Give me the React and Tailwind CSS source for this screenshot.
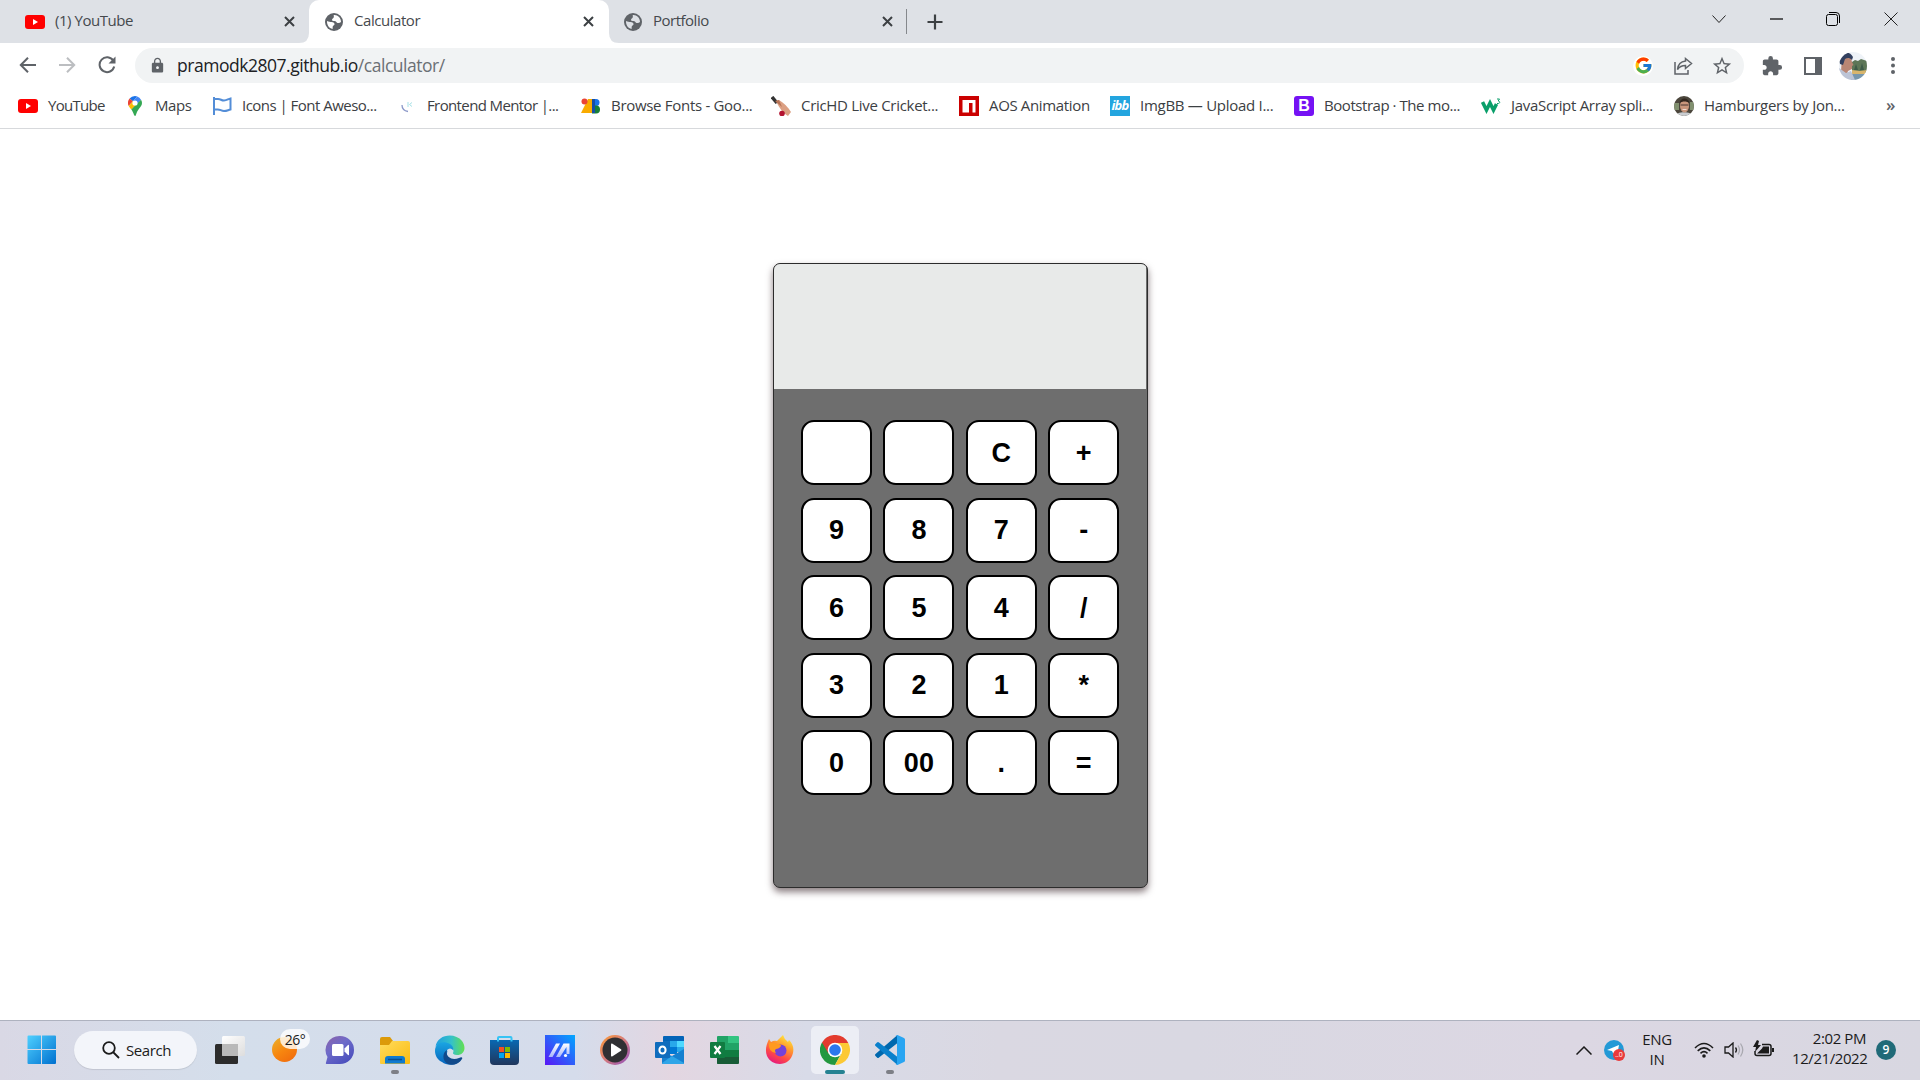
import React from "react";
import { FcGoogle } from "react-icons/fc";
import { MdLock, MdStarBorder, MdExtension } from "react-icons/md";

const YT = () => (
  <svg width="20" height="14" viewBox="0 0 20 14"><rect width="20" height="14" rx="3" fill="#f00" /><path d="M8 4l5 3-5 3z" fill="#fff" /></svg>
);
const CloseX = () => (
  <svg width="11" height="11" viewBox="0 0 11 11"><path d="M1 1l9 9M10 1l-9 9" stroke="#3c4043" strokeWidth="2" /></svg>
);
const Globe = ({ bg }) => (
  <svg width="18" height="18" viewBox="0 0 18 18">
    <circle cx="9" cy="9" r="9" fill="#5f6368" />
    <path d="M9.500 2C13 2 16 5 16 9c-1.500 1.500-3.500 1.300-4.500.2C10.800 8 10 8 8.500 8 7 8 6.500 6.500 7.500 5.700 9 5 9 4 8.700 2z" fill={bg} />
    <path d="M2 8c2 1 3 .8 4.500 1 2 .3 3.300 1 3 2.500-.2 1-1.700 1-1.800 2.300L7.600 16C4 15.200 1.800 12 2 8z" fill={bg} />
  </svg>
);

const Tab = ({ icon, title, active, cls, tcls }) => (
  <div className={`relative flex h-[43px] shrink-0 items-center ${cls} ${active ? "rounded-t-[10px] bg-white" : ""}`}>
    <span className="flex w-5 shrink-0 justify-center">{icon}</span>
    <span className={`mb-[3px] ml-[10px] flex-1 text-[15px] leading-5 whitespace-nowrap text-[#45494d] ${tcls}`}>{title}</span>
    <CloseX />
    {active && (
      <>
        <svg className="absolute bottom-0 -left-[10px]" width="10" height="10"><path d="M10 0v10H0Q10 10 10 0z" fill="#fff" /></svg>
        <svg className="absolute -right-[10px] bottom-0" width="10" height="10"><path d="M0 0v10h10Q0 10 0 0z" fill="#fff" /></svg>
      </>
    )}
  </div>
);

const MapsIcon = () => (
  <svg width="14" height="20" viewBox="0 0 14 20">
    <path d="M7 0a7 7 0 0 0-5.4 2.5L4.9 5.3 9.2.4A7 7 0 0 0 7 0z" fill="#1a73e8" />
    <path d="M1.6 2.5A7 7 0 0 0 .7 10L4.9 5.3z" fill="#ea4335" />
    <path d="M9.2.4L4.9 5.3 9 8.7l4-5A7 7 0 0 0 9.2.4z" fill="#4285f4" />
    <path d="M.7 10c.6 1.2 1.6 2.3 2.6 3.6L9 8.7 4.9 5.3z" fill="#fbbc04" />
    <path d="M13 3.700l-9.700 9.900C5.500 16.500 6 20 7 20c1.200 0 1.100-3.500 3.500-6.600C12.300 11 14 9.500 14 7c0-1.300-.4-2.300-1-3.300z" fill="#34a853" />
    <circle cx="7" cy="7" r="2.600" fill="#fff" />
  </svg>
);
const FlagIcon = () => (
  <svg width="19" height="18" viewBox="0 0 19 18" fill="none" stroke="#538dd7" strokeWidth="2"><path d="M1 0v18" /><path d="M1 2h4c3 0 3 1.500 6 1.500S15 2 17.500 1.500v11c-2.500.5-3.500 1.500-6.500 1.500s-4-2-7-1.500H1" /></svg>
);
const MentorIcon = () => (
  <svg width="14" height="14" viewBox="0 0 14 14" fill="none" strokeWidth="1.300"><path d="M2 6c0 4 3 6 6 6.500" stroke="#8a97c8" /><path d="M8 3v5M12 3.500L9.500 5.500l2.500 2" stroke="#a6e1e6" strokeWidth="1" /></svg>
);
const FontsIcon = () => (
  <svg width="20" height="16" viewBox="0 0 20 16"><path d="M7 1h5v14H0z" fill="#f9ab00" /><circle cx="3.500" cy="3.500" r="3" fill="#ea4335" /><path d="M11 1h4a3.500 3.500 0 0 1 0 7h-4z" fill="#1a73e8" /><path d="M11 7.500h4a4 4 0 0 1 0 8h-4z" fill="#188038" /><path d="M11 1h3v14h-3z" fill="#174ea6" /></svg>
);
const BatIcon = () => (
  <svg width="20" height="20" viewBox="0 0 20 20"><path d="M1 1l5 6" stroke="#333" strokeWidth="3.500" /><path d="M5 5l3-1c5 3 9 7 12 12l-3 4c-4-2-9-8-12-15z" fill="#dca083" /><path d="M4 5l4-1 3 7z" fill="#b77356" /><circle cx="11" cy="17.500" r="2.800" fill="#b31230" /></svg>
);
const AosIcon = () => (
  <svg width="20" height="20" viewBox="0 0 20 20"><path d="M0 0h20v20H0z" fill="#cb0000" /><path d="M3.500 4h13v12.500h-3V7h-3.500v9.500H3.500z" fill="#fff" /></svg>
);
const ImgbbIcon = () => (
  <span className="flex h-5 w-5 items-center justify-center bg-[#23a5df] font-['Open_Sans',sans-serif] text-[13px] font-bold tracking-[-0.8px] text-white italic">ibb</span>
);
const BootIcon = () => (
  <span className="flex h-5 w-5 items-center justify-center rounded-[3px] bg-[#7512f4] font-['Liberation_Sans',sans-serif] text-[16px] font-bold text-white">B</span>
);
const W3Icon = () => (
  <svg width="20" height="16" viewBox="0 0 20 16" fill="none" stroke="#0a9f6a"><path d="M1.500 4l4 8 3.500-7 3.500 7L15.500 6" strokeWidth="3.600" /><path d="M16 1h2.500L17.200 3c2 0 2 2.500 0 2.500H16" strokeWidth="1" /></svg>
);
const FaceIcon = () => (
  <svg width="20" height="20" viewBox="0 0 20 20"><defs><clipPath id="fc"><circle cx="10" cy="10" r="10" /></clipPath></defs><g clipPath="url(#fc)"><path d="M0 0h20v20H0z" fill="#4b463c" /><path d="M0 7h5v7H0zM16 6h4v8h-4z" fill="#81906f" /><path d="M1 20c1-5 17-5 18 0z" fill="#c9ccd0" /><ellipse cx="10.500" cy="10" rx="4.500" ry="6.500" fill="#c9967c" /><path d="M5.500 7c1-6 9-6 10 0-3-2-7-2-10 0z" fill="#32271f" /><path d="M6.500 9h8" stroke="#453530" /><path d="M8.500 13.500h4" stroke="#f1dcd2" /></g></svg>
);

const bookmarks = [
  [<YT />, "YouTube", "w-[107px]", "tracking-[-0.7px]"],
  [<MapsIcon />, "Maps", "w-[87px]", "tracking-[-0.4px]"],
  [<FlagIcon />, "Icons | Font Aweso...", "w-[185px]", "tracking-[-0.52px]"],
  [<MentorIcon />, "Frontend Mentor |...", "w-[184px]", "tracking-[-0.62px]"],
  [<FontsIcon />, "Browse Fonts - Goo...", "w-[190px]", "tracking-[-0.3px]"],
  [<BatIcon />, "CricHD Live Cricket...", "w-[188px]", "tracking-[-0.3px]"],
  [<AosIcon />, "AOS Animation", "w-[151px]", "tracking-[-0.35px]"],
  [<ImgbbIcon />, "ImgBB — Upload I...", "w-[184px]", "tracking-[-0.28px]"],
  [<BootIcon />, "Bootstrap · The mo...", "w-[187px]", "tracking-[-0.45px]"],
  [<W3Icon />, "JavaScript Array spli...", "w-[193px]", "tracking-[-0.3px]"],
  [<FaceIcon />, "Hamburgers by Jon...", "w-[200px]", "tracking-[-0.28px]"],
];

const Avatar = () => (
  <svg width="28" height="28" viewBox="0 0 28 28"><defs><clipPath id="av"><circle cx="14" cy="14" r="14" /></clipPath></defs><g clipPath="url(#av)"><path d="M0 0h28v28H0z" fill="#eff3f8" /><path d="M13 10l3-2 3 1 3-2 6 2v12H13z" fill="#5d7657" /><path d="M17 12l2 6h-4zM23 11l2 7h-4z" fill="#3e5b48" /><path d="M13 18l8 1 7-1v4H13z" fill="#d8b56c" /><path d="M12 22h16v6H12z" fill="#7797ad" /><path d="M3 6h9l1 4 1.500 3-1.500 1v3l-4 2-1 3-6-3z" fill="#b98674" /><path d="M0 8C3-1 11-1 14 5l-1 3C10 5 8 6 6 7L4 13 1 12z" fill="#33405f" /><path d="M0 16l7 5 5-2 4 9H0z" fill="#bcc4d6" /></g></svg>
);

const keys = ["", "", "C", "+", "9", "8", "7", "-", "6", "5", "4", "/", "3", "2", "1", "*", "0", "00", ".", "="];

const Calculator = () => (
  <div className="h-[625px] w-[375px] overflow-hidden rounded-[7px] border border-[#2c2c2c] bg-[#6e6e6e] shadow-[0_4px_7px_rgba(60,40,45,0.6)]">
    <div className="mr-px h-[125px] bg-[#e8eae9]" />
    <div className="mt-[31px] ml-[27px] grid grid-cols-[71px_71px_71px_71px] gap-x-[11.4px] gap-y-[12.5px]">
      {keys.map((k, i) => (
        <button key={i} className="h-[65px] rounded-[13px] border-2 border-black bg-white font-['Liberation_Sans',Arial,sans-serif] text-[27px] leading-[30px] font-bold text-black">{k}</button>
      ))}
    </div>
  </div>
);

const WinLogo = () => (
  <svg width="30" height="30" viewBox="0 0 30 30"><defs><linearGradient id="wl" x1="0" y1="0" x2="1" y2="1"><stop offset="0" stopColor="#4fd0ff" /><stop offset="1" stopColor="#0070cf" /></linearGradient></defs><path d="M1.500 .5H14V14H.5V1.500Q.5.5 1.500 .5zM15 .5H28q1 0 1 1v12.500h-14zM.5 15H14v14H1.500Q.5 29 .5 28zM15 15h14V28q0 1-1 1H15z" fill="url(#wl)" /></svg>
);
const TaskView = () => (
  <svg width="30" height="30" viewBox="0 0 30 30"><defs><linearGradient id="tv" x1="0" y1="0" x2="1" y2="1"><stop offset="0" stopColor="#fff" /><stop offset="1" stopColor="#ddd" /></linearGradient></defs><rect y="9" width="23" height="20" rx="1.500" fill="#2c2c2c" /><rect x="7" y="1" width="23" height="20" rx="1.500" fill="url(#tv)" /><path d="M7 9h16v12H8.500Q7 21 7 19.500z" fill="#b9b9b9" /></svg>
);
const Chat = () => (
  <svg width="30" height="30" viewBox="0 0 30 30"><defs><linearGradient id="ch" x1="0" y1="0" x2="0.7" y2="1"><stop offset="0" stopColor="#8c62a8" /><stop offset=".45" stopColor="#6e6bc9" /><stop offset="1" stopColor="#4a4fbd" /></linearGradient></defs><path d="M15 1a14 14 0 1 1 0 28H1.500Q.5 29 1 27.500L2.500 22A14 14 0 0 1 15 1z" fill="url(#ch)" /><rect x="7" y="9" width="11.500" height="12" rx="1.500" fill="#fff" /><path d="M19.500 13.500L23 10q1-.5 1 .5v9q0 1-1 .5l-3.500-3.500z" fill="#fff" /></svg>
);
const Explorer = () => (
  <svg width="30" height="30" viewBox="0 0 30 30"><defs><linearGradient id="ex" x1="0" y1="0" x2="1" y2="1"><stop offset="0" stopColor="#ffdc5e" /><stop offset="1" stopColor="#fbbb10" /></linearGradient></defs><path d="M0 4q0-2 2-2h8l3 4v5H0z" fill="#dc9a09" /><path d="M0 10h9l3-4h16q2 0 2 2v20q0 1-1 1H1q-1 0-1-1z" fill="url(#ex)" /><path d="M5 28.500V24q0-3 3-3h14q3 0 3 3v4.500z" fill="#0f7bd0" /><path d="M8 24.500h14" stroke="#084f91" strokeWidth="1.500" /></svg>
);
const Edge = () => (
  <svg width="30" height="30" viewBox="0 0 30 30"><defs><linearGradient id="e1"><stop offset="0" stopColor="#1f9ee0" /><stop offset=".55" stopColor="#35c1c9" /><stop offset="1" stopColor="#63e04f" /></linearGradient><linearGradient id="e2" x1="0" y1="0" x2="0" y2="1"><stop offset="0" stopColor="#1ba5e2" /><stop offset="1" stopColor="#0664bd" /></linearGradient></defs><path d="M.5 12C2-1 20-3 27 6c5 7 2 14-5 14-4 0-6-2-4-4 1-1 0-4-3-5C9 7 3 8 .5 12z" fill="url(#e1)" /><path d="M0 16C0 8 8 5 15 9c3 2 4 5 3 7-2-3-7 0-6 4 1 6 8 7 14 5-5 6-14 6-19 2-4-2-7-6-7-11z" fill="url(#e2)" /><path d="M12 15c-2 7 5 11 12 8 2-1 4-1 3 1-3 5-9 7-14 5-6-3-6-11-1-14z" fill="#114a8b" /><path d="M12 15q3-3 6 0 1 1 0 3 0 2 4 3-7 1-9-3-.5-1-1-3z" fill="#d6dfea" /></svg>
);
const Store = () => (
  <svg width="30" height="30" viewBox="0 0 30 30"><defs><linearGradient id="st" x1="0" y1="0" x2="0" y2="1"><stop offset="0" stopColor="#0968b2" /><stop offset="1" stopColor="#20365c" /></linearGradient></defs><path d="M0 5h29v21q0 4-4 4H4q-4 0-4-4z" fill="url(#st)" /><path d="M8 6.500V3q0-1 1-1h11.500q1 0 1 1v3.500" fill="none" stroke="#36c3f4" strokeWidth="2" /><path d="M9 12h5v5H9z" fill="#f25022" /><path d="M15 12h5v5h-5z" fill="#7fba00" /><path d="M9 18h5v5H9z" fill="#00a4ef" /><path d="M15 18h5v5h-5z" fill="#ffb900" /></svg>
);
const MyAsus = () => (
  <svg width="30" height="30" viewBox="0 0 30 30"><defs><linearGradient id="ma" x1="0" y1="1" x2="1" y2="0"><stop offset="0" stopColor="#5a16f5" /><stop offset="1" stopColor="#00a8ff" /></linearGradient><linearGradient id="ml" x1="0" y1="1" x2="0" y2="0"><stop offset="0" stopColor="#a9b6fb" /><stop offset="1" stopColor="#fff" /></linearGradient></defs><path d="M0 0h30v30H0z" fill="url(#ma)" /><path d="M3.500 22L11 8.500h4L7.500 22zM11 22l7.500-13.500h6V19h-3v-7L15 22z" fill="url(#ml)" /><circle cx="20.500" cy="20.500" r="1.600" fill="#fff" /></svg>
);
const Media = () => (
  <svg width="30" height="30" viewBox="0 0 30 30"><defs><linearGradient id="md" x1="0" y1="0" x2="1" y2="1"><stop offset="0" stopColor="#ff9c33" /><stop offset=".5" stopColor="#d47a7d" /><stop offset="1" stopColor="#8e4fc0" /></linearGradient></defs><circle cx="15" cy="15" r="15" fill="url(#md)" /><circle cx="15" cy="15" r="12.500" fill="#303033" /><path d="M11 9.500q0-1.500 1.500-.7l8.500 5.500q1 .7 0 1.400l-8.500 5.500q-1.500.8-1.500-.7z" fill="#fff" /></svg>
);
const Outlook = () => (
  <svg width="30" height="30" viewBox="0 0 30 30"><path d="M8 2q0-1 1-1h19q1 0 1 1v14H8z" fill="#0364b8" /><path d="M8 6h7v7H8z" fill="#0f6cbd" /><path d="M15 6h7v7h-7z" fill="#28a8ea" /><path d="M22 6h7v7h-7z" fill="#50d9ff" /><path d="M15 12h7v7h-7z" fill="#0078d4" /><path d="M22 12h7v5h-7z" fill="#28a8ea" /><path d="M7 17l10 4 12-7v14q0 1-1 1H8q-1 0-1-1z" fill="#1580d0" /><path d="M7 28l10-7 12 7q0 1-1 1H8z" fill="#2fa5e8" /><rect y="7" width="15" height="16" rx="1" fill="#0f6cbd" /><ellipse cx="7.500" cy="15" rx="3.100" ry="3.600" fill="none" stroke="#fff" strokeWidth="2" /></svg>
);
const Excel = () => (
  <svg width="30" height="30" viewBox="0 0 30 30"><path d="M7 2q0-1 1-1h10v28H8q-1 0-1-1z" fill="#21a366" /><path d="M18 1h10q1 0 1 1v6H18z" fill="#33c481" /><path d="M18 8h11v7H18z" fill="#21a366" /><path d="M7 15h11v7H7zM18 15h11v7H18z" fill="#107c41" /><path d="M7 22h22v6q0 1-1 1H8q-1 0-1-1z" fill="#185c37" /><rect y="7" width="15" height="16" rx="1" fill="#107c41" /><path d="M4.500 11l6 8M10.500 11l-6 8" stroke="#fff" strokeWidth="2.200" /></svg>
);
const Firefox = () => (
  <svg width="30" height="30" viewBox="0 0 30 30"><defs><linearGradient id="ff" x1=".8" y1="0" x2=".3" y2="1"><stop offset="0" stopColor="#fff13f" /><stop offset=".35" stopColor="#ffa22e" /><stop offset=".7" stopColor="#ff4a45" /><stop offset="1" stopColor="#e51880" /></linearGradient></defs><path d="M4 4l2 3q3-2 6-1 3-3 6-6 1 4 5 7l1-2c4 4 5 8 4 13-3 14-21 14-26 3C0 16 1 10 4 4z" fill="url(#ff)" /><circle cx="15.500" cy="15.500" r="6" fill="#7542d8" /><path d="M4 8q6-1 8 1l4 1q0 3-5 4-2 1 0 4-8-1-7-10z" fill="#ff9a20" /></svg>
);
const Chrome = () => (
  <svg width="30" height="30" viewBox="0 0 30 30"><path d="M15 15L2 7.500A15 15 0 0 0 15 30l6-11z" fill="#24983f" /><path d="M15 8h13.300A15 15 0 0 1 15 30l6.500-11.500z" fill="#fcc934" /><path d="M2 7.500a15 15 0 0 1 26.300.5H15L8.500 18.500z" fill="#e33b2e" /><circle cx="15" cy="15" r="7.300" fill="#fff" /><circle cx="15" cy="15" r="5.800" fill="#2a78ed" /></svg>
);
const VSCode = () => (
  <svg width="30" height="30" viewBox="0 0 30 30"><path d="M22.500 0v8L4 22.500q-1 1-2 0L.5 21q-1-1 0-2z" fill="#0068ae" /><path d="M22.500 30v-8L4 7.500q-1-1-2 0L.5 9q-1 1 0 2z" fill="#0a80cc" /><path d="M22.500 0L29 3q1 .5 1 1.500v21q0 1-1 1.500l-6.500 3q-1 0-2-1 1.500.5 1.500-1V2q0-1.500-1.500-1z" fill="#29a5f2" /></svg>
);

const Pinned = ({ children, run }) => (
  <span className="relative flex h-12 w-[55px] shrink-0 items-center justify-center">
    {children}
    {run && <span className="absolute bottom-0 h-1 w-2 rounded-full bg-[#7d7f86]" />}
  </span>
);

export default function App() {
  return (
    <div className="flex h-[1080px] w-[1920px] flex-col overflow-hidden bg-white font-['Open_Sans','Noto_Sans',sans-serif] text-[#3c4043]">
      <header className="shrink-0">
        <div className="flex h-[43px] items-center bg-[#dee1e6]">
          <Tab icon={<YT />} title="(1) YouTube" cls="w-[309px] pl-[25px] pr-[14px]" tcls="tracking-[-0.45px]" />
          <Tab icon={<Globe bg="#fff" />} title="Calculator" active cls="w-[300px] pl-[15px] pr-[15px]" tcls="tracking-[-0.45px]" />
          <Tab icon={<Globe bg="#dee1e6" />} title="Portfolio" cls="w-[297px] pl-[14px] pr-[13px]" tcls="tracking-[-0.5px]" />
          <span className="h-[25px] w-px bg-[#85888c]" />
          <svg className="ml-[20px]" width="16" height="16"><path d="M8 .5v15M.5 8h15" stroke="#3c4043" strokeWidth="2.200" /></svg>
          <div className="mb-[6px] ml-auto flex w-[230px] items-center justify-around text-black">
            <svg width="14" height="8" fill="none" stroke="#222"><path d="M.5.5L7 7.500 13.500.5" /></svg>
            <svg width="13" height="2"><path d="M0 1h13" stroke="#000" strokeWidth="1.200" /></svg>
            <svg width="14" height="14" fill="none" stroke="#000"><rect x=".5" y="2.500" width="11" height="11" rx="2" /><path d="M3 .5h7q3.500 0 3.500 3.500v7" /></svg>
            <svg width="14" height="14" fill="none" stroke="#222"><path d="M.5.5l13 13M13.500.5l-13 13" /></svg>
          </div>
        </div>
        <div className="flex h-[45px] items-center">
          <svg className="mb-px ml-[19px]" width="17" height="16" fill="none" stroke="#5f6368" strokeWidth="2"><path d="M17 8H2M9 .8L1.800 8 9 15.200" /></svg>
          <svg className="mb-px ml-[23px]" width="17" height="16" fill="none" stroke="#bcbec1" strokeWidth="2"><path d="M0 8h15M8 .8L15.200 8 8 15.200" /></svg>
          <svg className="mb-[2px] ml-[22px]" width="18" height="18" viewBox="0 0 18 18" fill="none" stroke="#5f6368" strokeWidth="2"><path d="M15.300 4.800A7.400 7.400 0 1 0 16.200 10.500" /><path d="M17.500.5v7h-7z" fill="#5f6368" stroke="none" /></svg>
          <div className="ml-[19px] flex h-[35px] w-[1609px] items-center rounded-full bg-[#f1f3f4] pl-[14px]">
            <MdLock size={17} color="#5f6368" />
            <span className="mb-px ml-[11px] flex-1 text-[17.500px] leading-6 tracking-[-0.47px] text-[#202124]">pramodk2807.github.io<span className="text-[#6b7075]">/calculator/</span></span>
            <span className="mr-[20px] flex h-5 w-5 items-center justify-center rounded-full bg-white"><FcGoogle size={19} /></span>
            <svg className="mr-[18px]" width="20" height="18" viewBox="0 0 20 18" fill="none" stroke="#5f6368" strokeWidth="1.500"><path d="M2 5v12h13v-4" /><path d="M12.500 1.500l6 5-6 5V8.500c-4 0-6 1-8 4 .5-5 3.500-8 8-8.500z" /></svg>
            <MdStarBorder className="mr-[11px]" size={22} color="#5f6368" />
          </div>
          <MdExtension className="ml-[17px]" size={22} color="#5f6368" />
          <svg className="ml-[21px]" width="18" height="18"><path d="M1 1h16v16H1z" fill="none" stroke="#5f6368" strokeWidth="2" /><path d="M11 1h6v16h-6z" fill="#5f6368" /></svg>
          <span className="ml-[17px]"><Avatar /></span>
          <svg className="mb-px ml-[24px]" width="4" height="17"><g fill="#5f6368"><circle cx="2" cy="2" r="2" /><circle cx="2" cy="8.500" r="2" /><circle cx="2" cy="15" r="2" /></g></svg>
        </div>
        <div className="flex h-[41px] items-center border-b border-[#d7d9dc] pb-[4px] pl-[18px]">
          {bookmarks.map(([icon, t, w, tr]) => (
            <div key={t} className={`flex shrink-0 items-center ${w}`}>
              <span className="flex w-5 shrink-0 justify-center">{icon}</span>
              <span className={`mb-[2px] ml-[10px] text-[15px] leading-5 whitespace-nowrap ${tr}`}>{t}</span>
            </div>
          ))}
          <span className="mb-[3px] ml-[12px] text-[17px] leading-5 font-semibold text-[#5f6368]">»</span>
        </div>
      </header>

      <main className="flex flex-1 justify-center pt-[134px] pl-[1px]">
        <Calculator />
      </main>

      <footer className="flex h-[60px] shrink-0 items-center border-t border-[#aeb2bf] bg-[linear-gradient(90deg,#d9d8e5_0%,#d4deeb_12%,#d5dceb_30%,#e3d6e1_35%,#d8dbe8_42%,#dad8e2_52%,#d9d8e2_62%,#dcd7e3_82%,#d8d7e1_100%)] pb-px text-[#1b1b1b]">
        <span className="ml-[27px]"><WinLogo /></span>
        <div className="ml-[17px] flex h-[38px] w-[123px] items-center rounded-full bg-[#f3f5fa] pl-[28px] shadow-[0_1px_1px_rgba(0,0,0,0.1)]">
          <svg width="18" height="18" fill="none" stroke="#1b1b1b" strokeWidth="1.800"><circle cx="7" cy="7" r="5.800" /><path d="M11 11l6 6" /></svg>
          <span className="ml-[6px] text-[15px] tracking-[-0.4px]">Search</span>
        </div>
        <span className="ml-[18px]"><TaskView /></span>
        <span className="relative ml-[27px] h-[30px] w-[40px]">
          <span className="absolute top-[2px] left-0 h-[25px] w-[25px] rounded-full bg-[linear-gradient(145deg,#e9b32d,#f7860f_50%,#ef660d)]" />
          <span className="absolute -top-[6px] left-[8px] flex h-5 w-[30px] items-center justify-center rounded-full bg-white/80 text-[14px] tracking-[-0.5px]">26°</span>
        </span>
        <div className="flex">
          <Pinned><Chat /></Pinned>
          <Pinned run><Explorer /></Pinned>
          <Pinned><Edge /></Pinned>
          <Pinned><Store /></Pinned>
          <Pinned><MyAsus /></Pinned>
          <Pinned><Media /></Pinned>
          <Pinned><Outlook /></Pinned>
          <Pinned><Excel /></Pinned>
          <Pinned><Firefox /></Pinned>
          <span className="relative mx-[3.500px] flex h-12 w-12 items-center justify-center rounded-[5px] bg-[#eceef5]"><Chrome /><span className="absolute bottom-0 h-1 w-5 rounded-full bg-[#258292]" /></span>
          <Pinned run><VSCode /></Pinned>
        </div>
        <div className="mr-[24px] ml-auto flex items-center">
          <svg width="16" height="9" fill="none" stroke="#1b1b1b" strokeWidth="1.500"><path d="M.5 8.500L8 1l7.500 7.500" /></svg>
          <span className="relative ml-[12px] h-5 w-5">
            <svg width="20" height="20"><circle cx="10" cy="10" r="10" fill="#2399d6" /><path d="M3 10l12-5-2 11-4-3-1-2z" fill="#fff" /></svg>
            <span className="absolute -right-px -bottom-px flex h-[12px] w-[12px] items-center justify-center rounded-full bg-[#e83a3c] text-[7px] text-white">..0</span>
          </span>
          <span className="mb-[2px] ml-[16px] w-[34px] text-center text-[15px] leading-5 tracking-[-0.35px]">ENG<br />IN</span>
          <svg className="ml-[20px]" width="20" height="16" viewBox="0 0 20 16" fill="none" stroke="#1b1b1b" strokeWidth="1.600"><path d="M1 6q9-9 18 0M3.700 8.800q6.300-6 12.600 0M6.500 11.300q3.500-3.200 7 0" /><circle cx="10" cy="14" r="1.800" fill="#1b1b1b" stroke="none" /></svg>
          <svg className="ml-[10px]" width="20" height="16" viewBox="0 0 20 16" fill="none" stroke="#1b1b1b" strokeWidth="1.300"><path d="M1 5h3.500L9 1v14l-4.500-4H1z" /><path d="M11.500 5.500q2 2.500 0 5" /><path d="M14 3.500q3 4.500 0 9M16.500 1.500q4.500 6.500 0 13" stroke="#a9a9b0" /></svg>
          <svg className="mb-[2px] ml-[9px]" width="21" height="18" viewBox="0 0 21 18"><path d="M9 4.500h7q2 0 2 2v7q0 2-2 2H4q-2 0-2-2V11" fill="none" stroke="#1b1b1b" strokeWidth="1.500" /><path d="M10 6.500h6v7H4l5-5zM19 8h2v4h-2zM4 0L0 7h3l-1 5 6-7H5l1-4z" fill="#1b1b1b" /></svg>
          <span className="mb-[4px] ml-[18px] w-[74px] text-right text-[15px] leading-5 tracking-[-0.42px]">2:02 PM<br />12/21/2022</span>
          <span className="ml-[10px] flex h-5 w-5 items-center justify-center rounded-full bg-[#206a78] text-[12px] font-semibold text-white">9</span>
        </div>
      </footer>
    </div>
  );
}
